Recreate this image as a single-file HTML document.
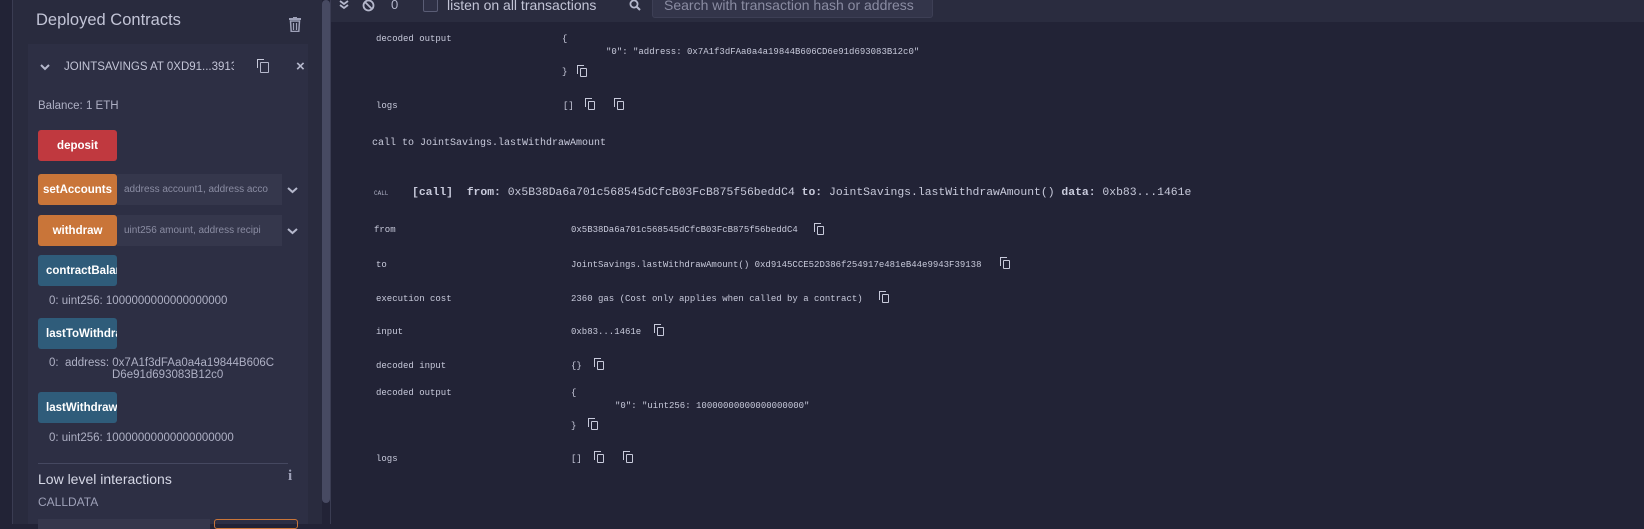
<!DOCTYPE html>
<html><head><meta charset="utf-8"><style>
*{margin:0;padding:0;box-sizing:border-box}
body{width:1644px;height:524px;overflow:hidden;background:#222336;font-family:"Liberation Sans",sans-serif;position:relative}
.a{position:absolute;white-space:nowrap}
.m{font-family:"Liberation Mono",monospace;font-size:9px;color:#c8cadb}
.btn{position:absolute;left:38px;width:79px;height:31px;border-radius:3px;color:#fff;font-size:11.5px;font-weight:bold;display:flex;align-items:center;justify-content:center;overflow:hidden}
.blue{background:#2f5c7a;justify-content:flex-start;padding-left:8px}
.inp{position:absolute;left:117px;width:165px;height:31px;background:#35374c;color:#8a8ca2;font-size:10px;padding-left:7px;display:flex;align-items:center;overflow:hidden;white-space:nowrap}
.out{position:absolute;left:49px;color:#aeb0c4;font-size:11.5px}
.cp{position:absolute;width:7px;height:9px;border:1.5px solid #c8cadb;border-radius:1px}
.cp:after{content:"";position:absolute;left:-4px;top:-4px;width:6px;height:8px;border-left:1.5px solid #c8cadb;border-top:1.5px solid #c8cadb}
</style></head><body>
<div class="a" style="left:0;top:0;width:12px;height:524px;background:#222336"></div>
<div class="a" style="left:12px;top:0;width:1px;height:524px;background:#3a3c52"></div>
<div class="a" style="left:13px;top:0;width:309px;height:524px;background:#292b3e"></div>
<div class="a" style="left:28px;top:44px;width:280px;height:480px;background:#2d2f44"></div>
<div class="a" style="left:322px;top:0;width:8px;height:503px;background:#474a62;border-radius:4px"></div>
<div class="a" style="left:330px;top:0;width:1px;height:524px;background:#3a3c52"></div>

<div class="a" style="left:36px;top:11px;font-size:16.5px;color:#c2c4d6">Deployed Contracts</div>
<svg class="a" style="left:289px;top:17px" width="12" height="15" viewBox="0 0 12 15"><rect x="0" y="1" width="12" height="2" fill="#9ea1b8"/><rect x="4" y="0" width="4" height="2" fill="#9ea1b8"/><path d="M1.5 4h9l-.7 10.5h-7.6z" fill="none" stroke="#9ea1b8" stroke-width="1.5"/><path d="M4.5 6v7M7.5 6v7" stroke="#9ea1b8" stroke-width="1.2"/></svg>

<svg class="a" style="left:40px;top:63px" width="10" height="8" viewBox="0 0 10 8"><path d="M1 2l4 4 4-4" fill="none" stroke="#b5b8cc" stroke-width="2"/></svg>
<div class="a" style="left:64px;top:61px;font-size:11.5px;color:#c2c4d6;width:170px;overflow:hidden">JOINTSAVINGS AT 0XD91...39138</div>
<div class="cp" style="left:260px;top:62px;width:9px;height:11px;border-color:#b5b8cc"></div>
<div class="a" style="left:296px;top:58px;font-size:15px;font-weight:bold;color:#b5b8cc">×</div>
<div class="a" style="left:38px;top:100px;font-size:11.5px;color:#aeb0c4">Balance: 1 ETH</div>

<div class="btn" style="top:130px;background:#c0393f">deposit</div>
<div class="btn" style="top:174px;background:#c97539">setAccounts</div>
<div class="inp" style="top:174px">address account1, address acco</div>
<svg class="a" style="left:287px;top:186px" width="11" height="8" viewBox="0 0 11 8"><path d="M1 2l4.5 4 4.5-4" fill="none" stroke="#b5b8cc" stroke-width="2"/></svg>
<div class="btn" style="top:215px;background:#c97539">withdraw</div>
<div class="inp" style="top:215px">uint256 amount, address recipi</div>
<svg class="a" style="left:287px;top:227px" width="11" height="8" viewBox="0 0 11 8"><path d="M1 2l4.5 4 4.5-4" fill="none" stroke="#b5b8cc" stroke-width="2"/></svg>
<div class="btn blue" style="top:255px;">contractBalan</div>
<div class="out" style="top:295px">0: uint256: 1000000000000000000</div>
<div class="btn blue" style="top:318px;">lastToWithdra</div>
<div class="out" style="top:357px">0:&nbsp; address: 0x7A1f3dFAa0a4a19844B606C</div>
<div class="out" style="top:369px;left:112px">D6e91d693083B12c0</div>
<div class="btn blue" style="top:392px;">lastWithdraw</div>
<div class="out" style="top:432px">0: uint256: 10000000000000000000</div>
<div class="a" style="left:38px;top:463px;width:250px;height:1px;background:#454860"></div>
<div class="a" style="left:38px;top:471px;font-size:14px;color:#d6d8e6">Low level interactions</div>
<div class="a" style="left:288px;top:468px;font-size:15px;font-weight:bold;color:#9ea1b8;font-family:'Liberation Serif',serif">i</div>
<div class="a" style="left:38px;top:495px;font-size:12px;color:#9ea1b8">CALLDATA</div>
<div class="a" style="left:38px;top:519px;width:172px;height:10px;background:#35374c"></div>
<div class="a" style="left:214px;top:519px;width:84px;height:10px;border:1px solid #c97539;border-radius:3px"></div>

<div class="a" style="left:331px;top:0;width:1313px;height:22px;background:#2a2c3f"></div>
<svg class="a" style="left:339px;top:0" width="10" height="10" viewBox="0 0 10 10"><path d="M1 1l4 3 4-3M1 5l4 3 4-3" fill="none" stroke="#b5b8cc" stroke-width="1.8"/></svg>
<svg class="a" style="left:362px;top:-1px" width="13" height="13" viewBox="0 0 13 13"><circle cx="6.5" cy="6.5" r="5" fill="none" stroke="#b5b8cc" stroke-width="1.8"/><path d="M3 3l7 7" stroke="#b5b8cc" stroke-width="1.8"/></svg>
<div class="a" style="left:391px;top:-3px;font-size:13px;color:#b5b8cc">0</div>
<div class="a" style="left:423px;top:-2px;width:15px;height:14px;border:1px solid #5a5d75;border-radius:2px;background:#2f3146"></div>
<div class="a" style="left:447px;top:-3px;font-size:14px;color:#c2c4d6">listen on all transactions</div>
<svg class="a" style="left:629px;top:-1px" width="12" height="12" viewBox="0 0 12 12"><circle cx="5" cy="5" r="3.6" fill="none" stroke="#b5b8cc" stroke-width="1.8"/><path d="M7.5 7.5l3.5 3.5" stroke="#b5b8cc" stroke-width="2"/></svg>
<div class="a" style="left:652px;top:-2px;width:281px;height:20px;background:#33354a;border-radius:0 0 3px 3px;border:1px solid #3d3f55"></div>
<div class="a" style="left:664px;top:-3px;font-size:14px;color:#8a8ca2">Search with transaction hash or address</div>

<div class="a m" style="left:376px;top:34px">decoded output</div>
<div class="a m" style="left:562px;top:34px">{</div>
<div class="a m" style="left:606px;top:47px">"0": "address: 0x7A1f3dFAa0a4a19844B606CD6e91d693083B12c0"</div>
<div class="a m" style="left:562px;top:67px">}</div>
<div class="cp" style="left:580px;top:68px"></div>
<div class="a m" style="left:376px;top:101px">logs</div>
<div class="a m" style="left:563px;top:101px">[]</div>
<div class="cp" style="left:588px;top:101px"></div>
<div class="cp" style="left:617px;top:101px"></div>

<div class="a m" style="left:372px;top:138px;font-size:10px">call to JointSavings.lastWithdrawAmount</div>

<div class="a m" style="left:374px;top:190px;font-size:6px;color:#aeb0c4">CALL</div>
<div class="a m" style="left:412px;top:187px;font-size:11.4px;color:#c8cadb"><b>[call]</b>&nbsp; <b>from:</b> 0x5B38Da6a701c568545dCfcB03FcB875f56beddC4 <b>to:</b> JointSavings.lastWithdrawAmount() <b>data:</b> 0xb83...1461e</div>

<div class="a m" style="left:374px;top:225px">from</div>
<div class="a m" style="left:571px;top:225px">0x5B38Da6a701c568545dCfcB03FcB875f56beddC4</div>
<div class="cp" style="left:817px;top:226px"></div>
<div class="a m" style="left:376px;top:260px">to</div>
<div class="a m" style="left:571px;top:260px">JointSavings.lastWithdrawAmount() 0xd9145CCE52D386f254917e481eB44e9943F39138</div>
<div class="cp" style="left:1003px;top:260px"></div>
<div class="a m" style="left:376px;top:294px">execution cost</div>
<div class="a m" style="left:571px;top:294px">2360 gas (Cost only applies when called by a contract)</div>
<div class="cp" style="left:882px;top:294px"></div>
<div class="a m" style="left:376px;top:327px">input</div>
<div class="a m" style="left:571px;top:327px">0xb83...1461e</div>
<div class="cp" style="left:657px;top:327px"></div>
<div class="a m" style="left:376px;top:361px">decoded input</div>
<div class="a m" style="left:571px;top:361px">{}</div>
<div class="cp" style="left:597px;top:361px"></div>
<div class="a m" style="left:376px;top:388px">decoded output</div>
<div class="a m" style="left:571px;top:388px">{</div>
<div class="a m" style="left:615px;top:401px">"0": "uint256: 10000000000000000000"</div>
<div class="a m" style="left:571px;top:421px">}</div>
<div class="cp" style="left:591px;top:421px"></div>
<div class="a m" style="left:376px;top:454px">logs</div>
<div class="a m" style="left:571px;top:454px">[]</div>
<div class="cp" style="left:597px;top:454px"></div>
<div class="cp" style="left:626px;top:454px"></div>
</body></html>
